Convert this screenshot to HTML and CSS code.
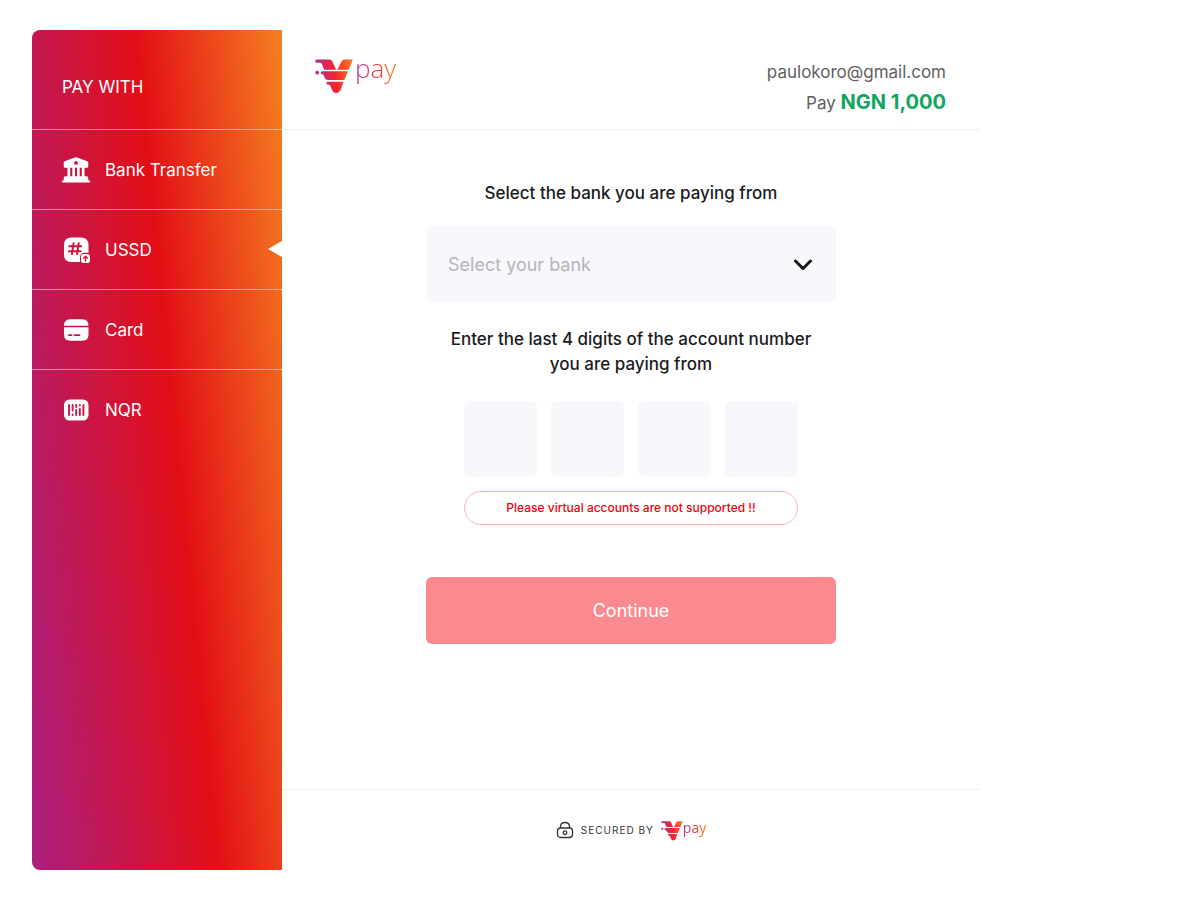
FILE: index.html
```html
<!DOCTYPE html>
<html lang="en">
<head>
<meta charset="utf-8">
<meta name="viewport" content="width=device-width, initial-scale=1">
<title>Vpay checkout</title>
<link rel="stylesheet" href="styles.css">
</head>
<body>
<svg class="defs" width="0" height="0" aria-hidden="true">
  <defs>
    <linearGradient id="brand" gradientUnits="userSpaceOnUse" x1="2" y1="10" x2="38" y2="6">
      <stop offset="0" stop-color="#a8328c"/>
      <stop offset=".5" stop-color="#f9232d"/>
      <stop offset="1" stop-color="#f58220"/>
    </linearGradient>
    <symbol id="mark" viewBox="0 0 38 35">
      <g fill="url(#brand)">
        <path d="M1.800 .5H14.500Q16.500 .5 17.500 2.700L21 10.500H22.500L26.500 2.500Q27.500 .5 30 .5H36.500Q38 .5 37.500 1.800L33.800 10.700H9.200L6.900 5Q6.300 3.700 4.800 3.700H1.800Q.2 3.700 .2 2.100Q.2 .5 1.800 .5Z"/>
        <path d="M7.500 12.200H33L29.300 21H13.100Q10.700 21 9.800 19L8.900 16.500Q8.500 15.300 7 15.300Q5.700 15.300 5.700 13.800Q5.700 12.200 7.500 12.200Z"/>
        <circle cx="2.200" cy="13.700" r="1.900"/>
        <path d="M12.800 22.700H28.500L26 30Q24.300 34 21.300 34Q18.300 34 16.800 30.500L15.500 27Q15 25.500 12.800 25.500Q11.300 25.500 11.300 24.100Q11.300 22.700 12.800 22.700Z"/>
      </g>
    </symbol>
  </defs>
</svg>
<div class="checkout">
  <nav class="sidebar" aria-label="Payment methods">
    <h1 class="sidebar-title">PAY WITH</h1>
    <a class="method" href="#bank">
      <svg class="method-icon" viewBox="0 0 28 28" aria-hidden="true"><path fill="#fff" fill-rule="evenodd" d="M13 1.400Q14 1 15 1.400L25.300 5.300Q26.300 5.700 26.300 6.800V10.300Q26.300 11.800 24.800 11.800H3.200Q1.700 11.800 1.700 10.300V6.800Q1.700 5.700 2.700 5.300ZM14 5a1.900 1.900 0 1 0 0 3.800a1.900 1.900 0 1 0 0-3.800ZM5.500 11.800H8.200V20.300H10.300V11.800H13V20.300H15V11.800H17.700V20.300H19.800V11.800H22.500V20.300H24.500Q26.300 20.300 26.300 22V24.600H27.300Q28.200 24.600 28.200 25.600Q28.200 26.600 27.300 26.600H.7Q-.2 26.600-.2 25.600Q-.2 24.600 .7 24.600H1.700V22Q1.700 20.300 3.500 20.300H5.500Z"/></svg>
      <span>Bank Transfer</span>
    </a>
    <a class="method method-active" href="#ussd" aria-current="page">
      <svg class="method-icon" viewBox="0 0 28 28" aria-hidden="true">
        <path fill="#fff" d="M9.500 1.500H19Q26.500 1.500 26.500 9V16.700H23Q18 16.700 18 21.500V26H9.500Q2 26 2 18.500V9Q2 1.500 9.500 1.500Z"/>
        <path fill="none" stroke="#cf163d" stroke-width="2" stroke-linecap="round" d="M11.500 7.300L9.900 18M16.700 7.300L15.100 18M7.300 10.200H19.200M6.800 15.200H18.700"/>
        <rect x="19" y="18" width="9" height="9" rx="2.700" fill="#fff"/>
        <path fill="none" stroke="#cf163d" stroke-width="1.400" stroke-linecap="round" stroke-linejoin="round" d="M23.500 25V20.500M21.700 22L23.500 20.300L25.300 22"/>
      </svg>
      <span>USSD</span>
    </a>
    <a class="method" href="#card">
      <svg class="method-icon" viewBox="0 0 28 28" aria-hidden="true"><path fill="#fff" fill-rule="evenodd" d="M2 9.800Q2 3.300 8 3.300H20.500Q26.500 3.300 26.500 9.800ZM2 11.300H26.500V18.500Q26.500 24.700 20.500 24.700H8Q2 24.700 2 18.500ZM7 18.300a.9.900 0 0 0 0 1.800H9.500a.9.900 0 0 0 0-1.800ZM12.500 18.300a.9.900 0 0 0 0 1.800H17.500a.9.900 0 0 0 0-1.800Z"/></svg>
      <span>Card</span>
    </a>
    <a class="method" href="#nqr">
      <svg class="method-icon" viewBox="0 0 28 28" aria-hidden="true">
        <rect x="2" y="3.500" width="24.500" height="21" rx="5.500" fill="#fff"/>
        <path fill="none" stroke="#cb1745" stroke-width="1.900" stroke-linecap="round" d="M7 9V19M10.600 9V14.500M10.600 18.500V19M14.200 9V11M14.200 14V19M17.800 9V9.500M17.800 13V19M21.400 9V19"/>
      </svg>
      <span>NQR</span>
    </a>
  </nav>
  <main class="panel">
    <header class="panel-header">
      <a class="logo" href="#home" aria-label="Vpay"><svg class="logo-mark" aria-hidden="true"><use href="#mark"/></svg><span class="logo-text">pay</span></a>
      <div class="summary">
        <p class="email">paulokoro@gmail.com</p>
        <p class="amount">Pay <strong>NGN 1,000</strong></p>
      </div>
    </header>
    <form class="form">
      <label class="label" for="bank">Select the bank you are paying from</label>
      <div class="select-wrap">
        <select id="bank" class="select"><option>Select your bank</option></select>
        <svg class="chevron" viewBox="0 0 20 12" aria-hidden="true"><path d="M2.500 2L10 9.500L17.500 2" fill="none" stroke="#16161a" stroke-width="3" stroke-linecap="round" stroke-linejoin="round"/></svg>
      </div>
      <fieldset class="digits">
        <legend class="label label-digits">Enter the last 4 digits of the account number you are paying from</legend>
        <div class="digit-row">
          <input class="digit" type="text" inputmode="numeric" maxlength="1" aria-label="Digit 1">
          <input class="digit" type="text" inputmode="numeric" maxlength="1" aria-label="Digit 2">
          <input class="digit" type="text" inputmode="numeric" maxlength="1" aria-label="Digit 3">
          <input class="digit" type="text" inputmode="numeric" maxlength="1" aria-label="Digit 4">
        </div>
      </fieldset>
      <p class="notice">Please virtual accounts are not supported !!</p>
      <button class="submit" type="button">Continue</button>
    </form>
    <footer class="panel-footer">
      <svg class="lock" viewBox="0 0 18 18" fill="none" stroke="#333" stroke-width="1.300" aria-hidden="true"><rect x="1.500" y="7" width="15" height="9.500" rx="3"/><path d="M4.500 7V5.500Q4.500 1.500 9 1.500T13.500 5.500V7"/><circle cx="9" cy="11.700" r="1.800"/></svg>
      <span class="secured">SECURED BY</span>
      <a class="logo logo-small" href="#home" aria-label="Vpay"><svg class="logo-mark" aria-hidden="true"><use href="#mark"/></svg><span class="logo-text">pay</span></a>
    </footer>
  </main>
</div>
</body>
</html>
```

FILE: styles.css
```css
* { box-sizing: border-box; }

body {
  margin: 0;
  padding: 30px 32px;
  background: #fff;
  color: #1b1b1e;
  font-family: Inter, "Liberation Sans", sans-serif;
}

h1, p { margin: 0; }
.defs { position: absolute; }

.checkout {
  display: flex;
  max-width: 948px;
  min-height: calc(100vh - 60px);
}

.sidebar {
  flex: 0 0 250px;
  border-radius: 8px 0 0 8px;
  background: linear-gradient(84.4deg, #aa1f80 0%, #e30e16 56%, #f57f20 100%);
  color: #fff;
}

.sidebar-title {
  height: 99px;
  padding: 46px 30px 0;
  font-size: 17px;
  font-weight: 400;
  line-height: 22px;
}

.method {
  position: relative;
  display: flex;
  align-items: center;
  gap: 15px;
  height: 80px;
  padding: 0 30px;
  border-top: 1px solid rgba(255, 255, 255, .5);
  color: inherit;
  font-size: 17px;
  text-decoration: none;
}

.method-icon {
  width: 28px;
  height: 28px;
  overflow: visible;
}

.method-active::after {
  content: "";
  position: absolute;
  right: 0;
  top: 31px;
  border: solid transparent;
  border-width: 8px 14px 8px 0;
  border-right-color: #fff;
}

.panel {
  flex: 1;
  min-width: 0;
  display: flex;
  flex-direction: column;
}

.panel-header {
  display: flex;
  justify-content: space-between;
  align-items: flex-start;
  height: 100px;
  padding: 27px 34px 0 33px;
  border-bottom: 1px solid #eee;
}

.logo {
  display: flex;
  align-items: flex-start;
  gap: 2px;
  padding-top: 2px;
  text-decoration: none;
}

.logo-mark { width: 38px; height: 35px; }

.logo-text {
  padding-bottom: 10px;
  background: linear-gradient(90deg, #a8328c, #ee3a35 55%, #f58220);
  -webkit-background-clip: text;
  background-clip: text;
  color: transparent;
  font-family: "Open Sans", sans-serif;
  font-size: 26px;
  font-weight: 300;
  line-height: 18px;
}

.summary {
  color: #5f5f61;
  font-size: 17px;
  line-height: 30px;
  text-align: right;
}

.summary strong { color: #12a461; font-size: 20px; }

.form {
  flex: 1;
  display: flex;
  flex-direction: column;
  align-items: center;
  width: 100%;
  max-width: 410px;
  margin: 0 auto;
  padding-top: 51px;
}

.label {
  font-size: 17px;
  font-weight: 500;
  line-height: 25px;
  text-align: center;
}

.select-wrap {
  position: relative;
  width: 100%;
  margin-top: 20px;
}

.select {
  display: block;
  width: 100%;
  height: 76px;
  padding: 0 60px 0 22px;
  border: 0;
  border-radius: 6px;
  appearance: none;
  background: #f8f7fc;
  color: #b5b5b7;
  font: 400 18px Inter, sans-serif;
}

.chevron {
  position: absolute;
  right: 23px;
  top: 33px;
  width: 20px;
  height: 12px;
  pointer-events: none;
}

.digits {
  width: 100%;
  min-width: 0;
  margin: 25px 0 0;
  padding: 0;
  border: 0;
}

.label-digits { width: 100%; padding: 0 10px; }

.digit-row {
  display: flex;
  gap: 14px;
  padding: 24px 38px 0;
}

.digit {
  flex: 1;
  width: 100%;
  min-width: 0;
  height: 76px;
  padding: 0;
  border: 0;
  border-radius: 6px;
  background: #f8f7fc;
  font: 500 24px Inter, sans-serif;
  text-align: center;
}

.notice {
  width: 334px;
  max-width: 100%;
  margin-top: 14px;
  border: 1px solid #ffb0b4;
  border-radius: 17px;
  color: #f00010;
  font-size: 12px;
  font-weight: 500;
  line-height: 32px;
  text-align: center;
}

.submit {
  width: 100%;
  height: 67px;
  margin-top: 52px;
  border: 0;
  border-radius: 6px;
  background: #fa8a90;
  color: #fff;
  font: 400 18px Inter, sans-serif;
}

.panel-footer {
  display: flex;
  justify-content: center;
  align-items: center;
  height: 81px;
  border-top: 1px solid #eee;
}

.lock { width: 18px; height: 18px; }

.secured {
  margin: 0 7px;
  color: #333;
  font-size: 10px;
  letter-spacing: 1px;
}

.logo-small { gap: 0; }
.logo-small .logo-mark { width: 22px; height: 20px; }

.logo-small .logo-text {
  padding-bottom: 4px;
  font-size: 14px;
  font-weight: 400;
  line-height: 14px;
}
```
